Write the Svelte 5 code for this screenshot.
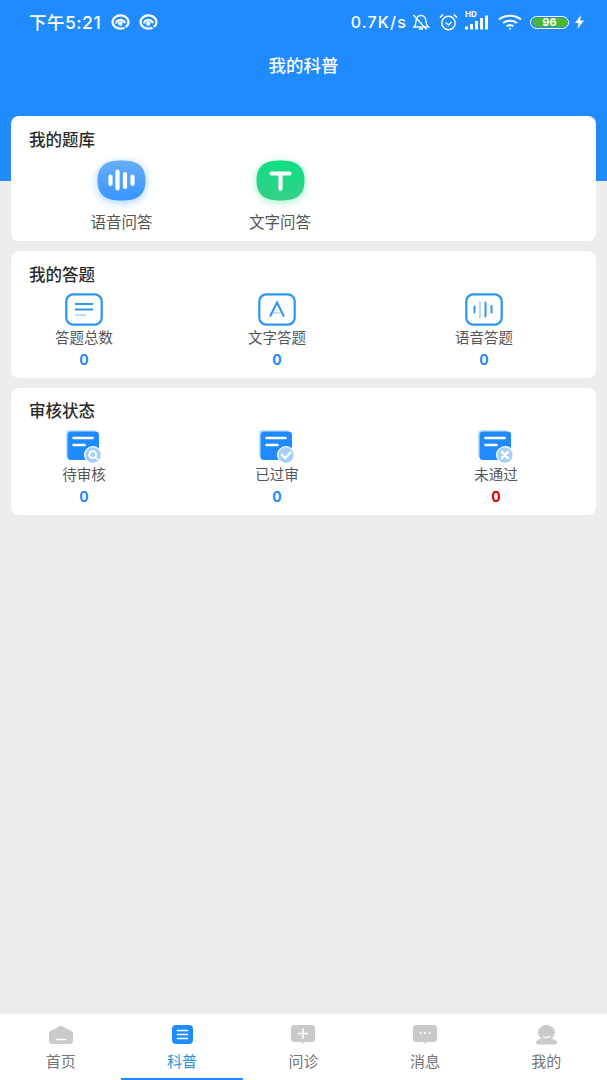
<script>
  const answers = [
    { label: '答题总数', value: 0, kind: 'lines' },
    { label: '文字答题', value: 0, kind: 'letter' },
    { label: '语音答题', value: 0, kind: 'voice' }
  ];

  const reviews = [
    { label: '待审核', value: 0, kind: 'search' },
    { label: '已过审', value: 0, kind: 'check' },
    { label: '未通过', value: 0, kind: 'cross', failed: true }
  ];

  const tabs = ['首页', '科普', '问诊', '消息', '我的'];
  const squircle = 'M24.5 0.5C38 0.5 48.5 4 48.5 20.5C48.5 37 38 40.5 24.5 40.5C11 40.5 0.5 37 0.5 20.5C0.5 4 11 0.5 24.5 0.5Z';
</script>

{#snippet eye()}
  <svg width="20" height="16" viewBox="0 0 20 16" fill="none">
    <ellipse cx="9.5" cy="8" rx="8" ry="6.6" stroke="#fff" stroke-width="2.3" />
    <path d="M5 9.5C5.5 5.5 11 4.2 14.3 9" stroke="#fff" stroke-width="2.1" />
    <circle cx="9.3" cy="9.6" r="2.3" fill="#fff" />
    <path d="M11.5 10.5L16 15.5" stroke="#1f8bff" stroke-width="1.2" />
  </svg>
{/snippet}

{#snippet answerIcon(kind)}
  <svg width="38" height="33" viewBox="0 0 38 33" fill="none">
    <rect x="1.3" y="1.3" width="35.4" height="30.4" rx="7" stroke="#2f95f5" stroke-width="2.2" />
    {#if kind === 'lines'}
      <path d="M10 11H28M10 16.5H28" stroke="#2f95f5" stroke-width="1.8" />
      <path d="M10 22H21" stroke="#b5d9fb" stroke-width="1.8" />
    {:else if kind === 'letter'}
      <path d="M12 23.5L19 9.5L26 23.5" stroke="#2f95f5" stroke-width="2" />
      <path d="M15 20H23" stroke="#b5d9fb" stroke-width="1.6" />
    {:else}
      <path d="M9.5 13.5V19.5M20.5 9.5V23.5M26.5 13V19.5" stroke="#2f95f5" stroke-width="2" stroke-linecap="round" />
      <path d="M15 8.5V24.5" stroke="#b5d9fb" stroke-width="2" stroke-linecap="round" />
    {/if}
  </svg>
{/snippet}

{#snippet reviewIcon(kind)}
  <svg width="36" height="34" viewBox="0 0 36 34" fill="none">
    <rect x="0" y="0" width="30" height="28" rx="3" fill="#c4e0fd" />
    <rect x="1.5" y="1.5" width="31.5" height="28.5" rx="3.5" fill="#1f8bff" />
    <path d="M7.5 8H26.5M7.5 15H18.5" stroke="#fff" stroke-width="2.6" stroke-linecap="round" />
    <circle cx="27" cy="25" r="9" fill="#fff" />
    <circle cx="27" cy="25" r="7.7" fill="#a5cffa" />
    {#if kind === 'search'}
      <circle cx="26.7" cy="24.7" r="3.4" stroke="#fff" stroke-width="1.9" />
      <path d="M29.5 27.5L31.5 29.5" stroke="#fff" stroke-width="1.6" stroke-linecap="round" />
    {:else if kind === 'check'}
      <path d="M23 25L26 28L31.5 22.5" stroke="#fff" stroke-width="2.4" stroke-linecap="round" stroke-linejoin="round" />
    {:else}
      <path d="M24 22L30 28M30 22L24 28" stroke="#fff" stroke-width="2.6" stroke-linecap="round" />
    {/if}
  </svg>
{/snippet}

{#snippet tabIcon(index)}
  {#if index === 0}
    <svg width="24" height="20" viewBox="0 0 24 20">
      <path d="M12 0.5L23 6.5C23.6 7 24 7.5 24 8.5V15.5C24 17.7 22.7 19 21 19H3C1.3 19 0 17.7 0 15.5V8.5C0 7.5 0.4 7 1 6.5Z" fill="#cacaca" />
      <path d="M7.5 14.5H16.5" stroke="#fff" stroke-width="1.6" stroke-linecap="round" />
    </svg>
  {:else if index === 1}
    <svg width="21" height="20" viewBox="0 0 21 20">
      <rect width="21" height="19" rx="4" fill="#1f8bff" />
      <path d="M5.5 5.5H15.5M5.5 9.5H15.5M5.5 13.5H15.5" stroke="#fff" stroke-width="1.7" stroke-linecap="round" />
    </svg>
  {:else if index === 2}
    <svg width="24" height="20" viewBox="0 0 24 20">
      <path d="M3 0H21C22.7 0 24 1.3 24 3V14C24 15.7 22.7 17 21 17H13.5L12 19L10.5 17H3C1.3 17 0 15.7 0 14V3C0 1.3 1.3 0 3 0Z" fill="#cacaca" />
      <path d="M7.5 8.5H16.5M12 4V13" stroke="#fff" stroke-width="1.7" stroke-linecap="round" />
    </svg>
  {:else if index === 3}
    <svg width="24" height="20" viewBox="0 0 24 20">
      <path d="M3 0H21C22.7 0 24 1.3 24 3V14C24 15.7 22.7 17 21 17H13.5L12 19L10.5 17H3C1.3 17 0 15.7 0 14V3C0 1.3 1.3 0 3 0Z" fill="#cacaca" />
      <circle cx="7.5" cy="8" r="1.1" fill="#fff" />
      <circle cx="12" cy="8" r="1.1" fill="#fff" />
      <circle cx="16.5" cy="8" r="1.1" fill="#fff" />
    </svg>
  {:else}
    <svg width="21" height="20" viewBox="0 0 21 20">
      <ellipse cx="10.5" cy="7.5" rx="8.5" ry="7.5" fill="#cacaca" />
      <path d="M2 19.5C0.5 19.5 0 18.5 0 17.5C0 15.5 3 14 6 13.5H15C18 14 21 15.5 21 17.5C21 18.5 20.5 19.5 19 19.5Z" fill="#cacaca" />
      <path d="M7 11.5C9 12.7 12 12.7 14 11.5" stroke="#fff" stroke-width="1.2" fill="none" stroke-linecap="round" />
    </svg>
  {/if}
{/snippet}

<div class="page">
  <header class="header">
    <div class="status">
      <span class="time">下午5:21</span>
      <span class="eyes">
        {@render eye()}
        {@render eye()}
      </span>
      <span class="status-right">
        <span class="speed">0.7K/s</span>
        <svg width="18" height="18" viewBox="0 0 18 18" fill="none" stroke="#fff" stroke-width="1.3">
          <path d="M2 14C3.5 12.5 4 11 4 8.5C4 5 6 2.5 9 2.5C12 2.5 14 5 14 8.5C14 11 14.5 12.5 16.5 14H2Z" />
          <path d="M1.5 2L14.5 16.5" />
          <path d="M7 16H11" stroke-width="1.6" />
        </svg>
        <svg width="19" height="18" viewBox="0 0 19 18" fill="none" stroke="#fff" stroke-width="1.4">
          <circle cx="9.5" cy="10" r="6.7" />
          <path d="M6.5 9.5L9.5 12L12.5 9" />
          <path d="M1 4.5L4 1.5M18 4.5L15 1.5" stroke-width="1.7" />
        </svg>
        <span class="signal">
          <b class="hd">HD</b>
          <svg width="24" height="15" viewBox="0 0 24 15" fill="#fff">
            <rect x="0" y="11.5" width="3" height="3" />
            <rect x="5" y="9" width="3" height="5.5" />
            <rect x="10" y="6" width="3" height="8.5" />
            <rect x="15" y="3" width="3" height="11.5" />
            <rect x="20" y="0.5" width="3" height="14" />
          </svg>
        </span>
        <svg class="wifi" width="24" height="16" viewBox="0 0 24 16" fill="none" stroke="#fff" stroke-width="2">
          <path d="M1 5.5C7 0.5 17 0.5 23 5.5" />
          <path d="M5 9C9 6 15 6 19 9" />
          <path d="M8.5 12.2C10.5 11 13.5 11 15.5 12.2" />
          <circle cx="12" cy="14.7" r="1" fill="#fff" stroke="none" />
        </svg>
        <span class="battery"><span class="level">96</span></span>
        <svg class="bolt" width="11" height="14" viewBox="0 0 11 14" fill="#fff">
          <path d="M7 0L1 8H4.5L3.5 14L10 5.5H6.2Z" />
        </svg>
      </span>
    </div>
    <h1 class="title">我的科普</h1>
  </header>

  <main class="cards">
    <section class="card bank">
      <h2>我的题库</h2>
      <div class="row bank-row">
        <div class="item">
          <svg class="soft blue" width="49" height="41" viewBox="0 0 49 41">
            <defs>
              <linearGradient id="blueFill" x1="0" y1="0" x2="0" y2="1">
                <stop offset="0" stop-color="#68aef9" />
                <stop offset="1" stop-color="#3795ff" />
              </linearGradient>
            </defs>
            <path d={squircle} fill="url(#blueFill)" />
            <path d="M13.5 16.5V24M20.5 11.5V28.5M28 14V27M35.5 16.5V24" stroke="#fff" stroke-width="4.2" stroke-linecap="round" />
          </svg>
          <span class="bank-label">语音问答</span>
        </div>
        <div class="item">
          <svg class="soft green" width="49" height="41" viewBox="0 0 49 41">
            <defs>
              <linearGradient id="greenFill" x1="0" y1="0" x2="0" y2="1">
                <stop offset="0" stop-color="#0fe083" />
                <stop offset="1" stop-color="#35cf87" />
              </linearGradient>
            </defs>
            <path d={squircle} fill="url(#greenFill)" />
            <path d="M15.5 13.5H33.5M24.5 13.5V29" stroke="#fff" stroke-width="4.2" stroke-linecap="round" />
          </svg>
          <span class="bank-label">文字问答</span>
        </div>
      </div>
    </section>

    <section class="card answer">
      <h2>我的答题</h2>
      <div class="row answer-row">
        {#each answers as item}
          <div class="item">
            {@render answerIcon(item.kind)}
            <span class="label">{item.label}</span>
            <span class="value">{item.value}</span>
          </div>
        {/each}
      </div>
    </section>

    <section class="card review">
      <h2>审核状态</h2>
      <div class="row review-row">
        {#each reviews as item}
          <div class="item">
            {@render reviewIcon(item.kind)}
            <span class="label">{item.label}</span>
            <span class="value" class:failed={item.failed}>{item.value}</span>
          </div>
        {/each}
      </div>
    </section>
  </main>

  <nav class="tabs">
    {#each tabs as tab, i}
      <div class="tab" class:active={i === 1}>
        <span class="tab-icon">{@render tabIcon(i)}</span>
        <span>{tab}</span>
      </div>
    {/each}
  </nav>
</div>

<style>
  :global(body) {
    margin: 0;
    background: #ededed;
  }

  .page {
    display: flex;
    flex-direction: column;
    height: 1080px;
    background: #ededed;
    font-family: Inter, "Noto Sans CJK SC", sans-serif;
    overflow: hidden;
  }

  .header {
    height: 181px;
    flex: none;
    background: #1f8bff;
    color: #fff;
  }

  .status {
    display: flex;
    align-items: center;
    height: 44px;
    padding: 0 22px 0 29px;
  }

  .time {
    margin-bottom: 2px;
    font-size: 17.5px;
    font-weight: 500;
    letter-spacing: 0.5px;
  }

  .eyes {
    display: flex;
    gap: 8px;
    margin-left: 10px;
  }

  .status-right {
    display: flex;
    align-items: center;
    gap: 9px;
    margin-left: auto;
  }

  .status-right svg {
    display: block;
  }

  .speed {
    font-size: 16px;
    font-weight: 500;
    letter-spacing: 1.2px;
    margin-right: -4px;
  }

  .signal {
    display: block;
    position: relative;
    width: 24px;
    height: 18px;
    margin-left: -2px;
    top: -1px;
  }

  .signal svg {
    position: absolute;
    left: 0;
    bottom: 0;
  }

  .hd {
    position: absolute;
    left: 0;
    top: -2px;
    font-size: 8px;
    line-height: 9px;
    font-weight: 700;
  }

  .battery {
    display: block;
    box-sizing: border-box;
    width: 39px;
    height: 13px;
    margin-left: -1px;
    padding: 1px 1.5px;
    border: 1.3px solid #fff;
    border-radius: 7px;
  }

  .level {
    display: block;
    height: 100%;
    border-radius: 4px;
    background: #4cb82f;
    color: #fff;
    font-size: 11px;
    font-weight: 700;
    line-height: 8px;
    text-align: center;
  }

  .bolt {
    margin-left: -4px;
  }

  .title {
    margin: 9px 0 0;
    font-size: 17.5px;
    font-weight: 500;
    line-height: 26px;
    text-align: center;
  }

  .cards {
    display: flex;
    flex-direction: column;
    gap: 10px;
    margin-top: -65px;
    padding: 0 11px;
  }

  .card {
    box-sizing: border-box;
    height: 127px;
    padding-top: 13px;
    background: #fff;
    border-radius: 8px;
  }

  .bank {
    height: 125px;
  }

  .review {
    padding-top: 12px;
  }

  h2 {
    margin: 0;
    padding-left: 18px;
    color: #2b2b2b;
    font-size: 16.5px;
    font-weight: 500;
    line-height: 22px;
  }

  .row {
    display: grid;
  }

  .bank-row {
    grid-template-columns: 221px 96px;
    margin-top: 9px;
  }

  .answer-row {
    grid-template-columns: 146px 240px 174px;
    margin-top: 7px;
  }

  .review-row {
    grid-template-columns: 146px 240px 198px;
    margin-top: 8px;
  }

  .item {
    display: flex;
    flex-direction: column;
    align-items: center;
  }

  .item svg {
    display: block;
  }

  .soft.blue {
    filter: drop-shadow(0 2px 4px rgba(55, 149, 255, 0.45));
  }

  .soft.green {
    filter: drop-shadow(0 2px 4px rgba(30, 215, 130, 0.4));
  }

  .bank-label {
    margin-top: 11px;
    color: #555;
    font-size: 15.5px;
    line-height: 22px;
  }

  .label {
    margin-top: 2px;
    color: #555;
    font-size: 14.5px;
    line-height: 20px;
  }

  .review .label {
    margin-top: 1px;
  }

  .value {
    margin-top: 2px;
    color: #1f8bff;
    font-size: 14px;
    font-weight: 700;
    line-height: 20px;
  }

  .value.failed {
    color: #dc0000;
  }

  .tabs {
    display: grid;
    grid-template-columns: repeat(5, 1fr);
    height: 66px;
    margin-top: auto;
    background: #fff;
  }

  .tab {
    box-sizing: border-box;
    display: flex;
    flex-direction: column;
    align-items: center;
    padding-top: 11px;
    color: #757575;
    font-size: 15px;
    line-height: 22px;
  }

  .tab-icon {
    display: block;
    height: 20px;
    margin-bottom: 6px;
  }

  .tab-icon svg {
    display: block;
  }

  .tab.active {
    color: #2a93dc;
    border-bottom: 2px solid #1f8bff;
  }
</style>
